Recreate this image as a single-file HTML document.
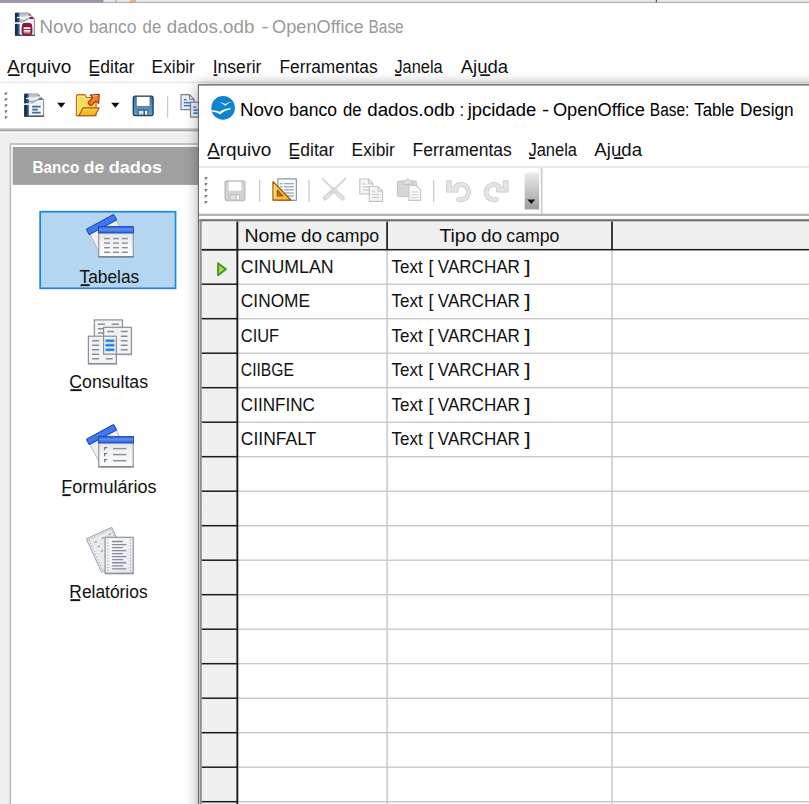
<!DOCTYPE html>
<html lang="pt-BR"><head><meta charset="utf-8"><title>Novo banco de dados.odb - OpenOffice Base</title>
<style>
html,body{margin:0;padding:0;background:#fff;overflow:hidden}
svg{display:block;font-family:'Liberation Sans',sans-serif}
text{white-space:pre}
</style></head><body>
<svg width="809" height="804" viewBox="0 0 809 804">
<defs>
<linearGradient id="shL" x1="0" x2="1" y1="0" y2="0"><stop offset="0" stop-color="#000" stop-opacity="0"/><stop offset="0.5" stop-color="#000" stop-opacity="0.05"/><stop offset="1" stop-color="#000" stop-opacity="0.17"/></linearGradient>
<linearGradient id="shT" x1="0" x2="0" y1="0" y2="1"><stop offset="0" stop-color="#000" stop-opacity="0"/><stop offset="0.5" stop-color="#000" stop-opacity="0.04"/><stop offset="1" stop-color="#000" stop-opacity="0.2"/></linearGradient>
<linearGradient id="ovf" x1="0" x2="0" y1="0" y2="1"><stop offset="0" stop-color="#ececec"/><stop offset="1" stop-color="#9c9c9c"/></linearGradient>
<linearGradient id="gl1" x1="0" x2="0" y1="0" y2="1"><stop offset="0" stop-color="#e4e4e4"/><stop offset="0.6" stop-color="#a6a6a6"/><stop offset="1" stop-color="#b4b4b4"/></linearGradient>
<linearGradient id="gl2" x1="0" x2="0" y1="0" y2="1"><stop offset="0" stop-color="#a0a0a0"/><stop offset="0.6" stop-color="#6e6e6e"/><stop offset="1" stop-color="#6a6a6a"/></linearGradient>
<linearGradient id="gl3" x1="0" x2="1" y1="0" y2="0"><stop offset="0" stop-color="#b0b0b0"/><stop offset="1" stop-color="#6c6c6c"/></linearGradient>
<filter id="blur" x="-10%" y="-10%" width="120%" height="120%"><feGaussianBlur stdDeviation="7"/></filter>
</defs>
<rect width="809" height="804" fill="#fff"/>

<g id="behind">
<rect x="0" y="0" width="809" height="2.7" fill="#e6e6e6"/>
<rect x="0" y="0" width="103.4" height="2.7" fill="#a193b0"/>
<rect x="115.5" y="0" width="1" height="2.5" fill="#9a9a9a"/>
<rect x="130" y="0" width="6" height="2" fill="#e8a040" opacity=".7"/>
<rect x="655.8" y="0" width="1.2" height="2.6" fill="#555"/>
<rect x="0" y="2" width="809" height="0.8" fill="#9a9a9a"/>
</g>
<g id="main-title">
<text y="32.8" font-size="17.6" fill="#999" font-weight="400" ><tspan x="39.52" textLength="43.76" lengthAdjust="spacingAndGlyphs">Novo</tspan> <tspan x="88.92" textLength="47.56" lengthAdjust="spacingAndGlyphs">banco</tspan> <tspan x="142.62" textLength="18.56" lengthAdjust="spacingAndGlyphs">de</tspan> <tspan x="166.82" textLength="87.56" lengthAdjust="spacingAndGlyphs">dados.odb</tspan> <tspan x="261.62" textLength="7.16" lengthAdjust="spacingAndGlyphs">-</tspan> <tspan x="272.02" textLength="91.66" lengthAdjust="spacingAndGlyphs">OpenOffice</tspan> <tspan x="368.52" textLength="35.16" lengthAdjust="spacingAndGlyphs">Base</tspan></text>
</g>
<g>
<text y="72.7" font-size="17.5" fill="#111" font-weight="400" ><tspan x="7.03" textLength="64.35" lengthAdjust="spacingAndGlyphs">Arquivo</tspan></text><rect x="8.20" y="74.30" width="11.60" height="1.7" fill="#111"/>
<text y="72.7" font-size="17.5" fill="#111" font-weight="400" ><tspan x="88.62" textLength="45.75" lengthAdjust="spacingAndGlyphs">Editar</tspan></text><rect x="89.80" y="74.30" width="9.40" height="1.7" fill="#111"/>
<text y="72.7" font-size="17.5" fill="#111" font-weight="400" ><tspan x="151.62" textLength="43.25" lengthAdjust="spacingAndGlyphs">Exibir</tspan></text>
<text y="72.7" font-size="17.5" fill="#111" font-weight="400" ><tspan x="212.72" textLength="48.75" lengthAdjust="spacingAndGlyphs">Inserir</tspan></text><rect x="213.60" y="74.30" width="3.80" height="1.7" fill="#111"/>
<text y="72.7" font-size="17.5" fill="#111" font-weight="400" ><tspan x="279.43" textLength="98.25" lengthAdjust="spacingAndGlyphs">Ferramentas</tspan></text>
<text y="72.7" font-size="17.5" fill="#111" font-weight="400" ><tspan x="394.43" textLength="48.25" lengthAdjust="spacingAndGlyphs">Janela</tspan></text><rect x="395.00" y="74.30" width="6.20" height="1.7" fill="#111"/>
<text y="72.7" font-size="17.5" fill="#111" font-weight="400" ><tspan x="460.73" textLength="47.45" lengthAdjust="spacingAndGlyphs">Ajuda</tspan></text></g>
<rect x="480.3" y="74.3" width="9.6" height="1.7" fill="#111"/>
<rect x="0" y="81.6" width="809" height="1.2" fill="#e3e3e3"/>
<g id="main-toolbar">
<path d="M4.800 92.40h3l-1.800 2.500h-1.200z" fill="#757575"/>
<path d="M4.800 98.37h3l-1.800 2.500h-1.200z" fill="#757575"/>
<path d="M4.800 104.34h3l-1.800 2.500h-1.200z" fill="#757575"/>
<path d="M4.800 110.31h3l-1.800 2.500h-1.200z" fill="#757575"/>
<path d="M4.800 116.28h3l-1.800 2.500h-1.200z" fill="#757575"/>
<path d="M57.1 102.8h8.3l-4.15 4.9z" fill="#111"/>
<path d="M111.2 102.8h8.3l-4.15 4.9z" fill="#111"/>
<rect x="166.9" y="95.9" width="1.3" height="21.8" fill="#c9c9c9"/>
<g id="main-icons"><defs>
<linearGradient id="dband" x1="0" x2="1" y1="0" y2="0"><stop offset="0" stop-color="#0a1d36"/><stop offset="0.45" stop-color="#17355a"/><stop offset="1" stop-color="#5d86ad"/></linearGradient>
<linearGradient id="dtop" x1="0" x2="0" y1="0" y2="1"><stop offset="0" stop-color="#a9b4c0"/><stop offset="0.5" stop-color="#dde2e8"/><stop offset="1" stop-color="#b4c1cf"/></linearGradient>
<linearGradient id="fold1" x1="0" x2="0" y1="0" y2="1"><stop offset="0" stop-color="#fbd850"/><stop offset="1" stop-color="#fbe060"/></linearGradient>
<linearGradient id="fold2" x1="0" x2="0" y1="0" y2="1"><stop offset="0" stop-color="#fbd23c"/><stop offset="1" stop-color="#eeb01e"/></linearGradient>
<linearGradient id="arr" x1="1" x2="0" y1="0" y2="1"><stop offset="0" stop-color="#e8501a"/><stop offset="0.4" stop-color="#ff8a2a"/><stop offset="1" stop-color="#f06a10"/></linearGradient>
<linearGradient id="savg" x1="0" x2="0" y1="0" y2="1"><stop offset="0" stop-color="#3d719f"/><stop offset="1" stop-color="#6b9ec8"/></linearGradient>
<linearGradient id="tri" x1="0" x2="1" y1="0" y2="1"><stop offset="0" stop-color="#fde060"/><stop offset="1" stop-color="#f2b020"/></linearGradient>
</defs><g transform="translate(-9.2,-80.9)"><path d="M24.6 94h13.3l5.7 5.9v16.3h-19z" fill="#f3f5f8" stroke="#6f7780" stroke-width="0.9"/><path d="M24.6 94h13.3l5.4 5.6v2.6c-5 -.6 -7.5 2.6 -10.3 2.6h-8.4z" fill="url(#dtop)"/><rect x="24.3" y="93.8" width="4.7" height="22.6" fill="url(#dband)"/><rect x="24.3" y="115.6" width="19.6" height="1.1" fill="#33383f"/><path d="M37.9 94l5.7 5.9h-4.4z" fill="#8c1a3c"/><path d="M22 104.6c5 -1.6 8 -.2 10 -.2c3.4 0 4.6 -3.6 11 -3.6" fill="none" stroke="#fff" stroke-width="1.5"/><path d="M26 98.6c3.5 -1 5.5 .3 7.4 .1c2.2 -.3 3.4 -1.6 7.6 -1.7" fill="none" stroke="#fff" stroke-width="1.3" opacity=".9"/><path d="M25 101.8c3.500 -.6 5.5 .4 7.4 .1c2.4 -.4 4 -2.800 9 -2.900" fill="none" stroke="#3d4d60" stroke-width=".8" opacity=".55"/><rect x="30.8" y="105.6" width="10.8" height="10.600" rx="3.4" fill="#8c1538"/><ellipse cx="36.2" cy="105.900" rx="5" ry="2.200" fill="#8c1538"/><rect x="32.8" y="108.1" width="6.8" height="1.800" fill="#fff"/><rect x="32.8" y="110.8" width="6.8" height="1.800" fill="#fff"/><rect x="32.8" y="113.300" width="6.8" height="1" fill="#e8c8d0"/></g><g transform="translate(0,0)"><path d="M24.6 94h13.3l5.7 5.9v16.3h-19z" fill="#f3f5f8" stroke="#6f7780" stroke-width="0.9"/><path d="M24.6 94h13.3l5.4 5.6v2.6c-5 -.6 -7.5 2.6 -10.3 2.6h-8.4z" fill="url(#dtop)"/><rect x="24.3" y="93.8" width="4.7" height="22.6" fill="url(#dband)"/><rect x="24.3" y="115.6" width="19.6" height="1.1" fill="#33383f"/><path d="M37.9 94l5.7 5.9h-4.6z" fill="#5f7f9f"/><path d="M22 104.6c5 -1.6 8 -.2 10 -.2c3.4 0 4.6 -3.6 11 -3.6" fill="none" stroke="#fff" stroke-width="1.5"/><path d="M26 98.6c3.5 -1 5.5 .3 7.4 .1c2.2 -.3 3.4 -1.6 7.6 -1.7" fill="none" stroke="#fff" stroke-width="1.3" opacity=".9"/><path d="M25 101.8c3.500 -.6 5.5 .4 7.4 .1c2.4 -.4 4 -2.800 9 -2.900" fill="none" stroke="#3d4d60" stroke-width=".8" opacity=".55"/><rect x="32.1" y="105.75" width="8.6" height="1.7" rx=".5" fill="#3d6a98"/><rect x="32.1" y="108.75" width="5.8" height="1.7" rx=".5" fill="#3d6a98"/><rect x="32.1" y="111.75" width="8.6" height="1.7" rx=".5" fill="#3d6a98"/></g><g><path d="M76.4 115.6v-19.600q0 -1.400 1.400 -1.400h6.800q1.300 0 1.300 1.300v1.600h9q1.200 0 1.200 1.200v16.900z" fill="url(#fold1)" stroke="#b4661a" stroke-width="1.100" stroke-linejoin="round"/><path d="M77.600 114v-17.600h7.200v2.200h9.600" fill="none" stroke="#ffefa8" stroke-width=".9" opacity=".9"/><path d="M82.900 107.900h16.300l-4.400 7.800h-15.900z" fill="url(#fold2)" stroke="#a85a12" stroke-width="1.100" stroke-linejoin="round"/><path d="M90.300 95l8.900 -.6l-.5 9l-2.700 -2.600l-4.300 4.400q-.9 .7 -1.700 0l-1.500 -1.500q-.7 -.9 0 -1.700l4.400 -4.300z" fill="url(#arr)" stroke="#a82a0e" stroke-width="1.100" stroke-linejoin="round"/><path d="M92.300 96l5.600 -.4" stroke="#ffd0a0" stroke-width=".9" fill="none"/></g><g transform="translate(0,0)"><rect x="133.3" y="96.200" width="19.800" height="19.500" rx="1.800" fill="url(#savg)" stroke="#173b5e" stroke-width="1.300"/><rect x="136.800" y="96.900" width="12.800" height="9" fill="#fff"/><rect x="137.500" y="109.400" width="10.800" height="6" fill="#2f5f8a"/><rect x="138.800" y="110.700" width="4.700" height="3.900" fill="#d8dde2"/><rect x="145" y="110.700" width="2.200" height="3.900" fill="#fff"/></g><g transform="translate(0,0)"><path d="M181 94.7h8.600l4.600 4.700v10.200h-13.200z" fill="#eef1f5" stroke="#7b8490" stroke-width="1.200" stroke-linejoin="round"/><path d="M189.6 94.7v4.700h4.600" fill="none" stroke="#7b8490" stroke-width="1"/><rect x="183.8" y="98.9" width="2.800" height="1.500" fill="#2e7cc4"/><rect x="183.8" y="101.9" width="7.600" height="1.500" fill="#2e7cc4"/><rect x="183.8" y="104.9" width="7.600" height="1.500" fill="#2e7cc4"/><path d="M190.5 102.2h8.600l4.600 4.700v10.200h-13.200z" fill="#eef1f5" stroke="#7b8490" stroke-width="1.200" stroke-linejoin="round"/><path d="M199.1 102.2v4.700h4.600" fill="none" stroke="#7b8490" stroke-width="1"/><rect x="193.3" y="106.4" width="2.800" height="1.500" fill="#2e7cc4"/><rect x="193.3" y="109.4" width="7.600" height="1.500" fill="#2e7cc4"/><rect x="193.3" y="112.4" width="7.600" height="1.500" fill="#2e7cc4"/></g></g>
</g>
<rect x="0" y="131.6" width="809" height="673" fill="#f0f0f0"/>
<rect x="0" y="128" width="809" height="3.6" fill="url(#gl1)"/>
<rect x="0" y="131.8" width="809" height="1.3" fill="#fafafa"/>
<g id="panel">
<rect x="9.5" y="143.1" width="300" height="700" fill="#bdbdbd"/>
<rect x="11.2" y="144.9" width="300" height="700" fill="#fff"/>
<rect x="12.7" y="146.9" width="300" height="38" fill="#a0a0a0"/>
<text y="172.5" font-size="17" fill="#fff" font-weight="700" ><tspan x="32.55" textLength="46.80" lengthAdjust="spacingAndGlyphs">Banco</tspan> <tspan x="83.75" textLength="20.50" lengthAdjust="spacingAndGlyphs">de</tspan> <tspan x="108.75" textLength="53.30" lengthAdjust="spacingAndGlyphs">dados</tspan></text>
<rect x="40.150" y="211.700" width="135.400" height="76.600" fill="#b4d6f1" stroke="#1f84dc" stroke-width="1.700"/>
</g>
<text y="282.90000000000003" font-size="17.5" fill="#111" font-weight="400" ><tspan x="79.53" textLength="59.75" lengthAdjust="spacingAndGlyphs">Tabelas</tspan></text>
<rect x="80.6" y="284.20" width="9.00" height="1.9" fill="#111"/>
<text y="387.90000000000003" font-size="17.5" fill="#111" font-weight="400" ><tspan x="69.33" textLength="78.65" lengthAdjust="spacingAndGlyphs">Consultas</tspan></text>
<rect x="70.4" y="389.20" width="11.20" height="1.9" fill="#111"/>
<text y="492.90000000000003" font-size="17.5" fill="#111" font-weight="400" ><tspan x="61.33" textLength="95.15" lengthAdjust="spacingAndGlyphs">Formulários</tspan></text>
<rect x="62.4" y="494.20" width="8.20" height="1.9" fill="#111"/>
<text y="597.9" font-size="17.5" fill="#111" font-weight="400" ><tspan x="69.33" textLength="78.25" lengthAdjust="spacingAndGlyphs">Relatórios</tspan></text>
<rect x="70.4" y="599.20" width="9.80" height="1.9" fill="#111"/>
<g id="left-icons"><defs>
<linearGradient id="wbody" x1="0" x2="0" y1="0" y2="1"><stop offset="0" stop-color="#dfe3e8"/><stop offset="0.35" stop-color="#f0f2f5"/><stop offset="1" stop-color="#fdfdfe"/></linearGradient>
<linearGradient id="wbody2" x1="0" x2="1" y1="0" y2="1"><stop offset="0" stop-color="#fafbfc"/><stop offset="1" stop-color="#e4e7ec"/></linearGradient>
<linearGradient id="wbar" x1="0" x2="0" y1="0" y2="1"><stop offset="0" stop-color="#2f63d8"/><stop offset="0.45" stop-color="#5a90f5"/><stop offset="1" stop-color="#2c5fd6"/></linearGradient>
</defs><g transform="translate(0,0)"><g transform="translate(86.3,229.2) rotate(-28.3)"><rect x="0.6" y="5" width="30" height="25.5" fill="#eef0f3" stroke="#a9aeb5" stroke-width="0.8"/><rect x="7" y="12.2" width="3" height="1.2" fill="#8a8f94"/><rect x="0" y="0" width="31.2" height="6.2" rx="0.8" fill="#3f78ea" stroke="#1f49b5" stroke-width="1"/></g><rect x="98.8" y="232" width="34.4" height="24.8" fill="url(#wbody)" stroke="#8b9097" stroke-width="1.1"/><rect x="98.3" y="256.2" width="35.4" height="1.3" fill="#777c83"/><rect x="98.6" y="226.6" width="34.8" height="6.4" fill="url(#wbar)" stroke="#1f49b5" stroke-width="1"/><rect x="104.1" y="237.9" width="5.9" height="1.4" fill="#8a8f95"/><rect x="113.0" y="237.9" width="5.9" height="1.4" fill="#8a8f95"/><rect x="121.9" y="237.9" width="5.9" height="1.4" fill="#8a8f95"/><rect x="104.1" y="242.4" width="5.9" height="1.4" fill="#8a8f95"/><rect x="113.0" y="242.4" width="5.9" height="1.4" fill="#8a8f95"/><rect x="121.9" y="242.4" width="5.9" height="1.4" fill="#8a8f95"/><rect x="104.1" y="247.0" width="5.9" height="1.4" fill="#8a8f95"/><rect x="113.0" y="247.0" width="5.9" height="1.4" fill="#8a8f95"/><rect x="121.9" y="247.0" width="5.9" height="1.4" fill="#8a8f95"/><rect x="104.1" y="251.6" width="5.9" height="1.4" fill="#8a8f95"/><rect x="113.0" y="251.6" width="5.9" height="1.4" fill="#8a8f95"/><rect x="121.9" y="251.6" width="5.9" height="1.4" fill="#8a8f95"/></g><g><rect x="94.3" y="319.9" width="28.2" height="20" fill="#f1f3f6" fill-opacity="1" stroke="#8b9097" stroke-width="1.2"/><rect x="94.0" y="340.2" width="29.099999999999998" height="0.9" fill="#70757c" opacity=".55"/><rect x="97.8" y="323.60" width="7.4" height="1.4" rx="0.7" fill="#8a8f95"/><rect x="111.5" y="323.60" width="7.5" height="1.4" rx="0.7" fill="#8a8f95"/><rect x="97.8" y="328.00" width="7.4" height="1.4" rx="0.7" fill="#8a8f95"/><rect x="111.5" y="328.00" width="7.5" height="1.4" rx="0.7" fill="#8a8f95"/><rect x="97.8" y="332.30" width="7.4" height="1.4" rx="0.7" fill="#8a8f95"/><rect x="111.5" y="332.30" width="7.5" height="1.4" rx="0.7" fill="#8a8f95"/><rect x="103.6" y="327.3" width="27.8" height="26.8" fill="#f1f3f6" fill-opacity="0.93" stroke="#8b9097" stroke-width="1.2"/><rect x="103.3" y="354.40000000000003" width="28.7" height="0.9" fill="#70757c" opacity=".55"/><rect x="120.6" y="330.80" width="7.2" height="1.4" rx="0.7" fill="#8a8f95"/><rect x="120.6" y="335.50" width="7.2" height="1.4" rx="0.7" fill="#8a8f95"/><rect x="120.6" y="340.00" width="7.2" height="1.4" rx="0.7" fill="#8a8f95"/><rect x="120.6" y="344.60" width="7.2" height="1.4" rx="0.7" fill="#8a8f95"/><rect x="120.6" y="349.00" width="7.2" height="1.4" rx="0.7" fill="#8a8f95"/><rect x="107.1" y="330.80" width="7.0" height="1.4" rx="0.7" fill="#8a8f95"/><rect x="88.4" y="336.2" width="28" height="27.4" fill="#f1f3f6" fill-opacity="0.9" stroke="#8b9097" stroke-width="1.2"/><rect x="88.10000000000001" y="363.9" width="28.9" height="0.9" fill="#70757c" opacity=".55"/><rect x="91.9" y="340.00" width="7.4" height="1.4" rx="0.7" fill="#8a8f95"/><rect x="91.9" y="344.60" width="7.4" height="1.4" rx="0.7" fill="#8a8f95"/><rect x="91.9" y="349.00" width="7.4" height="1.4" rx="0.7" fill="#8a8f95"/><rect x="91.9" y="353.50" width="7.4" height="1.4" rx="0.7" fill="#8a8f95"/><rect x="91.9" y="358.10" width="7.4" height="1.4" rx="0.7" fill="#8a8f95"/><rect x="105.6" y="358.10" width="7.4" height="1.4" rx="0.7" fill="#8a8f95"/><path d="M103.6 336.2v17.9h13.4" fill="none" stroke="#8b9097" stroke-width="1.2"/><rect x="104.6" y="338.7" width="10.6" height="4" rx="2" fill="#9fd0f5" opacity=".8"/><rect x="105.4" y="339.65" width="9.0" height="2.1" rx="1.05" fill="#1c7fd2"/><rect x="104.6" y="343.3" width="10.6" height="4" rx="2" fill="#9fd0f5" opacity=".8"/><rect x="105.4" y="344.25" width="9.0" height="2.1" rx="1.05" fill="#1c7fd2"/><rect x="104.6" y="347.7" width="10.6" height="4" rx="2" fill="#9fd0f5" opacity=".8"/><rect x="105.4" y="348.65" width="9.0" height="2.1" rx="1.05" fill="#1c7fd2"/></g><g transform="translate(0,210)"><g transform="translate(86.3,229.2) rotate(-28.3)"><rect x="0.6" y="5" width="30" height="25.5" fill="#eef0f3" stroke="#a9aeb5" stroke-width="0.8"/><rect x="7" y="12.2" width="3" height="1.2" fill="#8a8f94"/><rect x="0" y="0" width="31.2" height="6.2" rx="0.8" fill="#3f78ea" stroke="#1f49b5" stroke-width="1"/></g><rect x="98.8" y="232" width="34.4" height="24.8" fill="url(#wbody)" stroke="#8b9097" stroke-width="1.1"/><rect x="98.3" y="256.2" width="35.4" height="1.3" fill="#777c83"/><rect x="98.6" y="226.6" width="34.8" height="6.4" fill="url(#wbar)" stroke="#1f49b5" stroke-width="1"/><rect x="113" y="237.9" width="13.4" height="1.4" fill="#8a8f95"/><path d="M104.6 240.2v-2.6h2.6" fill="none" stroke="#7a7f85" stroke-width="1.2"/><rect x="113" y="243.9" width="13.4" height="1.4" fill="#8a8f95"/><path d="M104.6 246.2v-2.6h2.6" fill="none" stroke="#7a7f85" stroke-width="1.2"/><rect x="113" y="250.0" width="13.4" height="1.4" fill="#8a8f95"/><path d="M104.6 252.3v-2.6h2.6" fill="none" stroke="#7a7f85" stroke-width="1.2"/></g><g><g transform="translate(86.3,538.9) rotate(-24.5)"><rect x="0" y="0" width="28" height="37" rx="1" fill="#e8ebef" stroke="#a2a8b0" stroke-width="1"/><rect x="1.800" y="1.800" width="24.400" height="33.400" fill="none" stroke="#8e949c" stroke-width=".9" stroke-dasharray="1 2"/><rect x="6" y="6" width="2.6" height="1.2" fill="#9aa0a8"/><rect x="14" y="5.5" width="2.6" height="1.2" fill="#9aa0a8"/><rect x="22" y="5" width="2.6" height="1.2" fill="#9aa0a8"/><rect x="7" y="11.5" width="2.6" height="1.2" fill="#9aa0a8"/><rect x="15" y="11" width="2.6" height="1.2" fill="#9aa0a8"/><rect x="8" y="17" width="2.6" height="1.2" fill="#9aa0a8"/><rect x="16" y="16.5" width="2.6" height="1.2" fill="#9aa0a8"/><rect x="9" y="22.5" width="2.6" height="1.2" fill="#9aa0a8"/><rect x="10" y="28" width="2.6" height="1.2" fill="#9aa0a8"/></g><rect x="105.1" y="537.3" width="28.1" height="35.9" fill="url(#wbody2)" stroke="#8b9097" stroke-width="1.2"/><rect x="104.8" y="573.4" width="29" height="1" fill="#70757c" opacity=".6"/><rect x="111.9" y="540.85" width="11.1" height="1.3" rx=".6" fill="#868c93"/><rect x="111.9" y="543.88" width="14.5" height="1.3" rx=".6" fill="#868c93"/><rect x="111.9" y="546.92" width="11.1" height="1.3" rx=".6" fill="#868c93"/><rect x="111.9" y="549.96" width="14.5" height="1.3" rx=".6" fill="#868c93"/><rect x="111.9" y="552.99" width="11.1" height="1.3" rx=".6" fill="#868c93"/><rect x="111.9" y="556.02" width="14.5" height="1.3" rx=".6" fill="#868c93"/><rect x="111.9" y="559.06" width="11.1" height="1.3" rx=".6" fill="#868c93"/><rect x="111.9" y="562.10" width="14.5" height="1.3" rx=".6" fill="#868c93"/><rect x="111.9" y="565.13" width="11.1" height="1.3" rx=".6" fill="#868c93"/><rect x="111.9" y="568.17" width="14.5" height="1.3" rx=".6" fill="#868c93"/><rect x="107.3" y="539.50" width="1.1" height="1" fill="#8e949b"/><rect x="129.8" y="539.50" width="1.1" height="1" fill="#8e949b"/><rect x="107.3" y="542.53" width="1.1" height="1" fill="#8e949b"/><rect x="129.8" y="542.53" width="1.1" height="1" fill="#8e949b"/><rect x="107.3" y="545.57" width="1.1" height="1" fill="#8e949b"/><rect x="129.8" y="545.57" width="1.1" height="1" fill="#8e949b"/><rect x="107.3" y="548.61" width="1.1" height="1" fill="#8e949b"/><rect x="129.8" y="548.61" width="1.1" height="1" fill="#8e949b"/><rect x="107.3" y="551.64" width="1.1" height="1" fill="#8e949b"/><rect x="129.8" y="551.64" width="1.1" height="1" fill="#8e949b"/><rect x="107.3" y="554.67" width="1.1" height="1" fill="#8e949b"/><rect x="129.8" y="554.67" width="1.1" height="1" fill="#8e949b"/><rect x="107.3" y="557.71" width="1.1" height="1" fill="#8e949b"/><rect x="129.8" y="557.71" width="1.1" height="1" fill="#8e949b"/><rect x="107.3" y="560.75" width="1.1" height="1" fill="#8e949b"/><rect x="129.8" y="560.75" width="1.1" height="1" fill="#8e949b"/><rect x="107.3" y="563.78" width="1.1" height="1" fill="#8e949b"/><rect x="129.8" y="563.78" width="1.1" height="1" fill="#8e949b"/><rect x="107.3" y="566.82" width="1.1" height="1" fill="#8e949b"/><rect x="129.8" y="566.82" width="1.1" height="1" fill="#8e949b"/><rect x="107.3" y="569.85" width="1.1" height="1" fill="#8e949b"/><rect x="129.8" y="569.85" width="1.1" height="1" fill="#8e949b"/></g></g>
<rect x="198" y="84.500" width="700" height="800" fill="#000" opacity="0.340" filter="url(#blur)"/>
<g id="inner">
<rect x="197.9" y="84.2" width="612" height="720" fill="#6b6b6b"/>
<rect x="199" y="85.6" width="611" height="720" fill="#fff"/>
<text y="115.9" font-size="17.6" fill="#000" font-weight="400" ><tspan x="239.92" textLength="43.76" lengthAdjust="spacingAndGlyphs">Novo</tspan> <tspan x="289.32" textLength="47.56" lengthAdjust="spacingAndGlyphs">banco</tspan> <tspan x="343.02" textLength="18.56" lengthAdjust="spacingAndGlyphs">de</tspan> <tspan x="367.22" textLength="87.56" lengthAdjust="spacingAndGlyphs">dados.odb</tspan> <tspan x="459.72" textLength="4.16" lengthAdjust="spacingAndGlyphs">:</tspan> <tspan x="467.72" textLength="68.66" lengthAdjust="spacingAndGlyphs">jpcidade</tspan> <tspan x="542.02" textLength="7.16" lengthAdjust="spacingAndGlyphs">-</tspan> <tspan x="552.92" textLength="91.96" lengthAdjust="spacingAndGlyphs">OpenOffice</tspan> <tspan x="649.82" textLength="39.56" lengthAdjust="spacingAndGlyphs">Base:</tspan> <tspan x="694.32" textLength="40.06" lengthAdjust="spacingAndGlyphs">Table</tspan> <tspan x="740.02" textLength="53.66" lengthAdjust="spacingAndGlyphs">Design</tspan></text>
<g>
<text y="155.7" font-size="17.5" fill="#111" font-weight="400" ><tspan x="207.03" textLength="64.35" lengthAdjust="spacingAndGlyphs">Arquivo</tspan></text><rect x="208.20" y="157.30" width="11.60" height="1.7" fill="#111"/>
<text y="155.7" font-size="17.5" fill="#111" font-weight="400" ><tspan x="288.62" textLength="45.75" lengthAdjust="spacingAndGlyphs">Editar</tspan></text><rect x="289.80" y="157.30" width="9.40" height="1.7" fill="#111"/>
<text y="155.7" font-size="17.5" fill="#111" font-weight="400" ><tspan x="351.62" textLength="43.25" lengthAdjust="spacingAndGlyphs">Exibir</tspan></text>
<text y="155.7" font-size="17.5" fill="#111" font-weight="400" ><tspan x="412.62" textLength="99.15" lengthAdjust="spacingAndGlyphs">Ferramentas</tspan></text>
<text y="155.7" font-size="17.5" fill="#111" font-weight="400" ><tspan x="528.42" textLength="48.65" lengthAdjust="spacingAndGlyphs">Janela</tspan></text><rect x="529.00" y="157.30" width="6.20" height="1.7" fill="#111"/>
<text y="155.7" font-size="17.5" fill="#111" font-weight="400" ><tspan x="594.33" textLength="47.75" lengthAdjust="spacingAndGlyphs">Ajuda</tspan></text></g>
<rect x="614" y="157.3" width="9.6" height="1.7" fill="#111"/>
<rect x="199" y="166.3" width="611" height="1.4" fill="#e0e0e0"/>
<path d="M204.800 176.90h3l-1.800 2.500h-1.200z" fill="#757575"/>
<path d="M204.800 182.93h3l-1.800 2.500h-1.200z" fill="#757575"/>
<path d="M204.800 188.96h3l-1.800 2.500h-1.200z" fill="#757575"/>
<path d="M204.800 194.99h3l-1.800 2.500h-1.200z" fill="#757575"/>
<path d="M204.800 201.02h3l-1.800 2.500h-1.200z" fill="#757575"/>
<rect x="259" y="179.8" width="1.3" height="22.2" fill="#c9c9c9"/>
<rect x="308.4" y="179.8" width="1.3" height="22.2" fill="#c9c9c9"/>
<rect x="433" y="179.8" width="1.3" height="22.2" fill="#c9c9c9"/>
<rect x="524.7" y="172.4" width="14.4" height="37" fill="url(#ovf)"/>
<path d="M527.3 199.4h7.9l-3.95 4.6z" fill="#111"/>
<rect x="540.8" y="167.6" width="1.8" height="46.4" fill="#cfcfcf"/>
<g id="inner-icons"><g><circle cx="223.100" cy="107.900" r="11.800" fill="#0e84cf"/><path d="M218.700 102.200q3.600 .1 6.600 1.900q3 -1.900 6.600 -2.100q-3.800 .9 -6.600 3.700q-2.800 -2.700 -6.600 -3.500z" fill="#fff"/><path d="M211.600 110.300q4.800 -.3 8.200 1.500q4.200 -3.400 10.900 -3.600l-.1 1.300q-5.800 .6 -10.300 5q-3.400 -2.600 -8.700 -2.900z" fill="#fff"/></g><g transform="translate(91.8,84.8)"><rect x="133.3" y="96.200" width="19.800" height="19.500" rx="1.800" fill="#d2d2d2" stroke="#bdbdbd" stroke-width="1.300"/><rect x="136.800" y="96.900" width="12.800" height="9" fill="#fdfdfd"/><rect x="137.500" y="109.400" width="10.800" height="6" fill="#c2c2c2"/><rect x="138.800" y="110.700" width="4.700" height="3.900" fill="#e6e6e6"/><rect x="145" y="110.700" width="2.200" height="3.900" fill="#fff"/></g><g><rect x="277.900" y="178.900" width="18.400" height="21.400" fill="#fdfdfe" stroke="#7f8b98" stroke-width="1.100"/><rect x="279.800" y="183.10" width="2.600" height="1.200" fill="#8aa0b8"/><rect x="284" y="183.10" width="9.900" height="1.200" fill="#8aa0b8"/><rect x="279.800" y="186.20" width="2.600" height="1.200" fill="#8aa0b8"/><rect x="284" y="186.20" width="9.900" height="1.200" fill="#8aa0b8"/><rect x="279.800" y="189.20" width="2.600" height="1.200" fill="#8aa0b8"/><rect x="284" y="189.20" width="9.900" height="1.200" fill="#8aa0b8"/><rect x="279.800" y="192.40" width="2.600" height="1.200" fill="#8aa0b8"/><rect x="284" y="192.40" width="9.900" height="1.200" fill="#8aa0b8"/><rect x="279.800" y="195.40" width="2.600" height="1.200" fill="#8aa0b8"/><rect x="284" y="195.40" width="9.900" height="1.200" fill="#8aa0b8"/><path d="M277.400 190.200l5.400 5.700h-5.400z" fill="#a87a3a"/><path d="M273 181.600v18.600h18.100zM277.400 190.200l5.400 5.700h-5.400z" fill="url(#tri)" fill-rule="evenodd" stroke="#9c5710" stroke-width="1.300" stroke-linejoin="round"/><path d="M274.200 184.600v14.400" stroke="#fff0a0" stroke-width=".8" opacity=".8"/></g><g fill="none" stroke-linecap="round"><path d="M322.200 178.700l15.500 14.600" stroke="#d2d2d2" stroke-width="1.600"/><path d="M345.400 178.700l-15.500 14.600" stroke="#d2d2d2" stroke-width="1.600"/><path d="M333 189.200l9.600 9" stroke="#d9d9d9" stroke-width="4.600"/><path d="M334.600 189.200l-9.600 9" stroke="#d9d9d9" stroke-width="4.600"/><path d="M338.500 194.600l3.200 3" stroke="#ececec" stroke-width="1.300"/><path d="M329.100 194.600l-3.200 3" stroke="#ececec" stroke-width="1.300"/></g><g transform="translate(178.8,84.3)"><path d="M181 94.7h8.600l4.600 4.700v10.200h-13.200z" fill="#f6f6f6" stroke="#c6c6c6" stroke-width="1.200" stroke-linejoin="round"/><path d="M189.6 94.7v4.700h4.600" fill="none" stroke="#c6c6c6" stroke-width="1"/><rect x="183.8" y="98.9" width="2.800" height="1.500" fill="#d2d2d2"/><rect x="183.8" y="101.9" width="7.600" height="1.500" fill="#d2d2d2"/><rect x="183.8" y="104.9" width="7.600" height="1.500" fill="#d2d2d2"/><path d="M190.5 102.2h8.600l4.600 4.700v10.200h-13.200z" fill="#f6f6f6" stroke="#c6c6c6" stroke-width="1.200" stroke-linejoin="round"/><path d="M199.1 102.2v4.700h4.600" fill="none" stroke="#c6c6c6" stroke-width="1"/><rect x="193.3" y="106.4" width="2.800" height="1.500" fill="#d2d2d2"/><rect x="193.3" y="109.4" width="7.600" height="1.500" fill="#d2d2d2"/><rect x="193.3" y="112.4" width="7.600" height="1.500" fill="#d2d2d2"/></g><g><rect x="397.300" y="181" width="19.400" height="15.600" rx="1.500" fill="#d6d6d6" stroke="#c4c4c4" stroke-width="1"/><path d="M402.800 184.200l1.300 -3.600h2.200l1.400 -2.200l1.400 2.200h2.200l1.300 3.600z" fill="#e2e2e2" stroke="#c0c0c0" stroke-width=".9"/><path d="M408.900 185.500h7.400l4.300 4.300v10.600h-11.700z" fill="#fafafa" stroke="#c6c6c6" stroke-width="1.100" stroke-linejoin="round"/><rect x="411.200" y="191.3" width="7" height="1.200" fill="#d4d4d4"/><rect x="411.200" y="194.2" width="7" height="1.200" fill="#d4d4d4"/><rect x="411.200" y="197.1" width="7" height="1.200" fill="#d4d4d4"/></g><g><path d="M453.8 189.800A7.600 7.600 0 1 1 458.700 199.300" fill="none" stroke="#cecece" stroke-width="5" stroke-linecap="round"/><path d="M446.600 180.800h4.800v6.500h6.600v4.800h-11.400z" fill="#e4e4e4" stroke="#cecece" stroke-width="1" stroke-linejoin="round"/><path d="M453.8 189.800A7.600 7.600 0 1 1 458.700 199.300" fill="none" stroke="#e4e4e4" stroke-width="3.400" stroke-linecap="round"/></g><g transform="translate(954.7,0) scale(-1,1)"><path d="M453.8 189.800A7.600 7.600 0 1 1 458.700 199.300" fill="none" stroke="#cecece" stroke-width="5" stroke-linecap="round"/><path d="M446.600 180.800h4.800v6.500h6.600v4.800h-11.400z" fill="#e4e4e4" stroke="#cecece" stroke-width="1" stroke-linejoin="round"/><path d="M453.8 189.800A7.600 7.600 0 1 1 458.700 199.300" fill="none" stroke="#e4e4e4" stroke-width="3.400" stroke-linecap="round"/></g></g>
<rect x="199" y="213.3" width="611" height="2.6" fill="url(#gl1)"/>
<rect x="199" y="218.9" width="611" height="2.7" fill="url(#gl2)"/>
<rect x="199.3" y="219" width="2.5" height="600" fill="url(#gl3)"/>
<rect x="201.8" y="221.6" width="608" height="28.10" fill="#f0f0f0"/>
<rect x="201.8" y="221.6" width="35" height="600" fill="#f0f0f0"/>
<rect x="238" y="283.55" width="572" height="1.300" fill="#c6c6c6"/>
<rect x="238" y="318.05" width="572" height="1.300" fill="#c6c6c6"/>
<rect x="238" y="352.55" width="572" height="1.300" fill="#c6c6c6"/>
<rect x="238" y="387.05" width="572" height="1.300" fill="#c6c6c6"/>
<rect x="238" y="421.55" width="572" height="1.300" fill="#c6c6c6"/>
<rect x="238" y="456.05" width="572" height="1.300" fill="#c6c6c6"/>
<rect x="238" y="490.55" width="572" height="1.300" fill="#c6c6c6"/>
<rect x="238" y="525.05" width="572" height="1.300" fill="#c6c6c6"/>
<rect x="238" y="559.55" width="572" height="1.300" fill="#c6c6c6"/>
<rect x="238" y="594.05" width="572" height="1.300" fill="#c6c6c6"/>
<rect x="238" y="628.55" width="572" height="1.300" fill="#c6c6c6"/>
<rect x="238" y="663.05" width="572" height="1.300" fill="#c6c6c6"/>
<rect x="238" y="697.55" width="572" height="1.300" fill="#c6c6c6"/>
<rect x="238" y="732.05" width="572" height="1.300" fill="#c6c6c6"/>
<rect x="238" y="766.55" width="572" height="1.300" fill="#c6c6c6"/>
<rect x="238" y="801.05" width="572" height="1.300" fill="#c6c6c6"/>
<rect x="386.40" y="249.7" width="1.400" height="600" fill="#c6c6c6"/>
<rect x="611.30" y="249.7" width="1.400" height="600" fill="#c6c6c6"/>
<rect x="201.8" y="248.95" width="36" height="1.500" fill="#1c1c1c"/>
<rect x="201.8" y="283.45" width="36" height="1.500" fill="#1c1c1c"/>
<rect x="201.8" y="317.95" width="36" height="1.500" fill="#1c1c1c"/>
<rect x="201.8" y="352.45" width="36" height="1.500" fill="#1c1c1c"/>
<rect x="201.8" y="386.95" width="36" height="1.500" fill="#1c1c1c"/>
<rect x="201.8" y="421.45" width="36" height="1.500" fill="#1c1c1c"/>
<rect x="201.8" y="455.95" width="36" height="1.500" fill="#1c1c1c"/>
<rect x="201.8" y="490.45" width="36" height="1.500" fill="#1c1c1c"/>
<rect x="201.8" y="524.95" width="36" height="1.500" fill="#1c1c1c"/>
<rect x="201.8" y="559.45" width="36" height="1.500" fill="#1c1c1c"/>
<rect x="201.8" y="593.95" width="36" height="1.500" fill="#1c1c1c"/>
<rect x="201.8" y="628.45" width="36" height="1.500" fill="#1c1c1c"/>
<rect x="201.8" y="662.95" width="36" height="1.500" fill="#1c1c1c"/>
<rect x="201.8" y="697.45" width="36" height="1.500" fill="#1c1c1c"/>
<rect x="201.8" y="731.95" width="36" height="1.500" fill="#1c1c1c"/>
<rect x="201.8" y="766.45" width="36" height="1.500" fill="#1c1c1c"/>
<rect x="201.8" y="800.95" width="36" height="1.500" fill="#1c1c1c"/>
<rect x="201.8" y="248.95" width="608" height="1.500" fill="#1c1c1c"/>
<rect x="236.400" y="221.6" width="1.900" height="600" fill="#1c1c1c"/>
<rect x="386.25" y="221.6" width="1.700" height="28.10" fill="#1c1c1c"/>
<rect x="611.15" y="221.6" width="1.700" height="28.10" fill="#1c1c1c"/>
<text y="241.7" font-size="17.5" fill="#111" font-weight="400" ><tspan x="244.43" textLength="52.05" lengthAdjust="spacingAndGlyphs">Nome</tspan> <tspan x="300.93" textLength="20.95" lengthAdjust="spacingAndGlyphs">do</tspan> <tspan x="326.12" textLength="53.05" lengthAdjust="spacingAndGlyphs">campo</tspan></text>
<text y="241.7" font-size="17.5" fill="#111" font-weight="400" ><tspan x="439.43" textLength="37.05" lengthAdjust="spacingAndGlyphs">Tipo</tspan> <tspan x="480.93" textLength="21.15" lengthAdjust="spacingAndGlyphs">do</tspan> <tspan x="506.32" textLength="53.15" lengthAdjust="spacingAndGlyphs">campo</tspan></text>
<text y="272.60" font-size="19" fill="#111" font-weight="400" ><tspan x="240.85" textLength="92.70" lengthAdjust="spacingAndGlyphs">CINUMLAN</tspan></text>
<text y="272.60" font-size="18.2" fill="#111" font-weight="400" ><tspan x="391.49" textLength="31.12" lengthAdjust="spacingAndGlyphs">Text</tspan> <tspan x="428.49" textLength="4.92" lengthAdjust="spacingAndGlyphs">[</tspan> <tspan font-size="19" x="437.79" textLength="82.12" lengthAdjust="spacingAndGlyphs">VARCHAR</tspan> <tspan x="524.29" textLength="6.52" lengthAdjust="spacingAndGlyphs">]</tspan></text>
<text y="307.10" font-size="19" fill="#111" font-weight="400" ><tspan x="240.85" textLength="69.20" lengthAdjust="spacingAndGlyphs">CINOME</tspan></text>
<text y="307.10" font-size="18.2" fill="#111" font-weight="400" ><tspan x="391.49" textLength="31.12" lengthAdjust="spacingAndGlyphs">Text</tspan> <tspan x="428.49" textLength="4.92" lengthAdjust="spacingAndGlyphs">[</tspan> <tspan font-size="19" x="437.79" textLength="82.12" lengthAdjust="spacingAndGlyphs">VARCHAR</tspan> <tspan x="524.29" textLength="6.52" lengthAdjust="spacingAndGlyphs">]</tspan></text>
<text y="341.60" font-size="19" fill="#111" font-weight="400" ><tspan x="240.85" textLength="38.30" lengthAdjust="spacingAndGlyphs">CIUF</tspan></text>
<text y="341.60" font-size="18.2" fill="#111" font-weight="400" ><tspan x="391.49" textLength="31.12" lengthAdjust="spacingAndGlyphs">Text</tspan> <tspan x="428.49" textLength="4.92" lengthAdjust="spacingAndGlyphs">[</tspan> <tspan font-size="19" x="437.79" textLength="82.12" lengthAdjust="spacingAndGlyphs">VARCHAR</tspan> <tspan x="524.29" textLength="6.52" lengthAdjust="spacingAndGlyphs">]</tspan></text>
<text y="376.10" font-size="19" fill="#111" font-weight="400" ><tspan x="240.85" textLength="53.10" lengthAdjust="spacingAndGlyphs">CIIBGE</tspan></text>
<text y="376.10" font-size="18.2" fill="#111" font-weight="400" ><tspan x="391.49" textLength="31.12" lengthAdjust="spacingAndGlyphs">Text</tspan> <tspan x="428.49" textLength="4.92" lengthAdjust="spacingAndGlyphs">[</tspan> <tspan font-size="19" x="437.79" textLength="82.12" lengthAdjust="spacingAndGlyphs">VARCHAR</tspan> <tspan x="524.29" textLength="6.52" lengthAdjust="spacingAndGlyphs">]</tspan></text>
<text y="410.60" font-size="19" fill="#111" font-weight="400" ><tspan x="240.85" textLength="74.10" lengthAdjust="spacingAndGlyphs">CIINFINC</tspan></text>
<text y="410.60" font-size="18.2" fill="#111" font-weight="400" ><tspan x="391.49" textLength="31.12" lengthAdjust="spacingAndGlyphs">Text</tspan> <tspan x="428.49" textLength="4.92" lengthAdjust="spacingAndGlyphs">[</tspan> <tspan font-size="19" x="437.79" textLength="82.12" lengthAdjust="spacingAndGlyphs">VARCHAR</tspan> <tspan x="524.29" textLength="6.52" lengthAdjust="spacingAndGlyphs">]</tspan></text>
<text y="445.10" font-size="19" fill="#111" font-weight="400" ><tspan x="240.85" textLength="75.40" lengthAdjust="spacingAndGlyphs">CIINFALT</tspan></text>
<text y="445.10" font-size="18.2" fill="#111" font-weight="400" ><tspan x="391.49" textLength="31.12" lengthAdjust="spacingAndGlyphs">Text</tspan> <tspan x="428.49" textLength="4.92" lengthAdjust="spacingAndGlyphs">[</tspan> <tspan font-size="19" x="437.79" textLength="82.12" lengthAdjust="spacingAndGlyphs">VARCHAR</tspan> <tspan x="524.29" textLength="6.52" lengthAdjust="spacingAndGlyphs">]</tspan></text>
<path d="M218 263.200l8 6l-8 6z" fill="#a9d840" stroke="#3f9a1c" stroke-width="1.800" stroke-linejoin="round"/>
</g>
</svg></body></html>
